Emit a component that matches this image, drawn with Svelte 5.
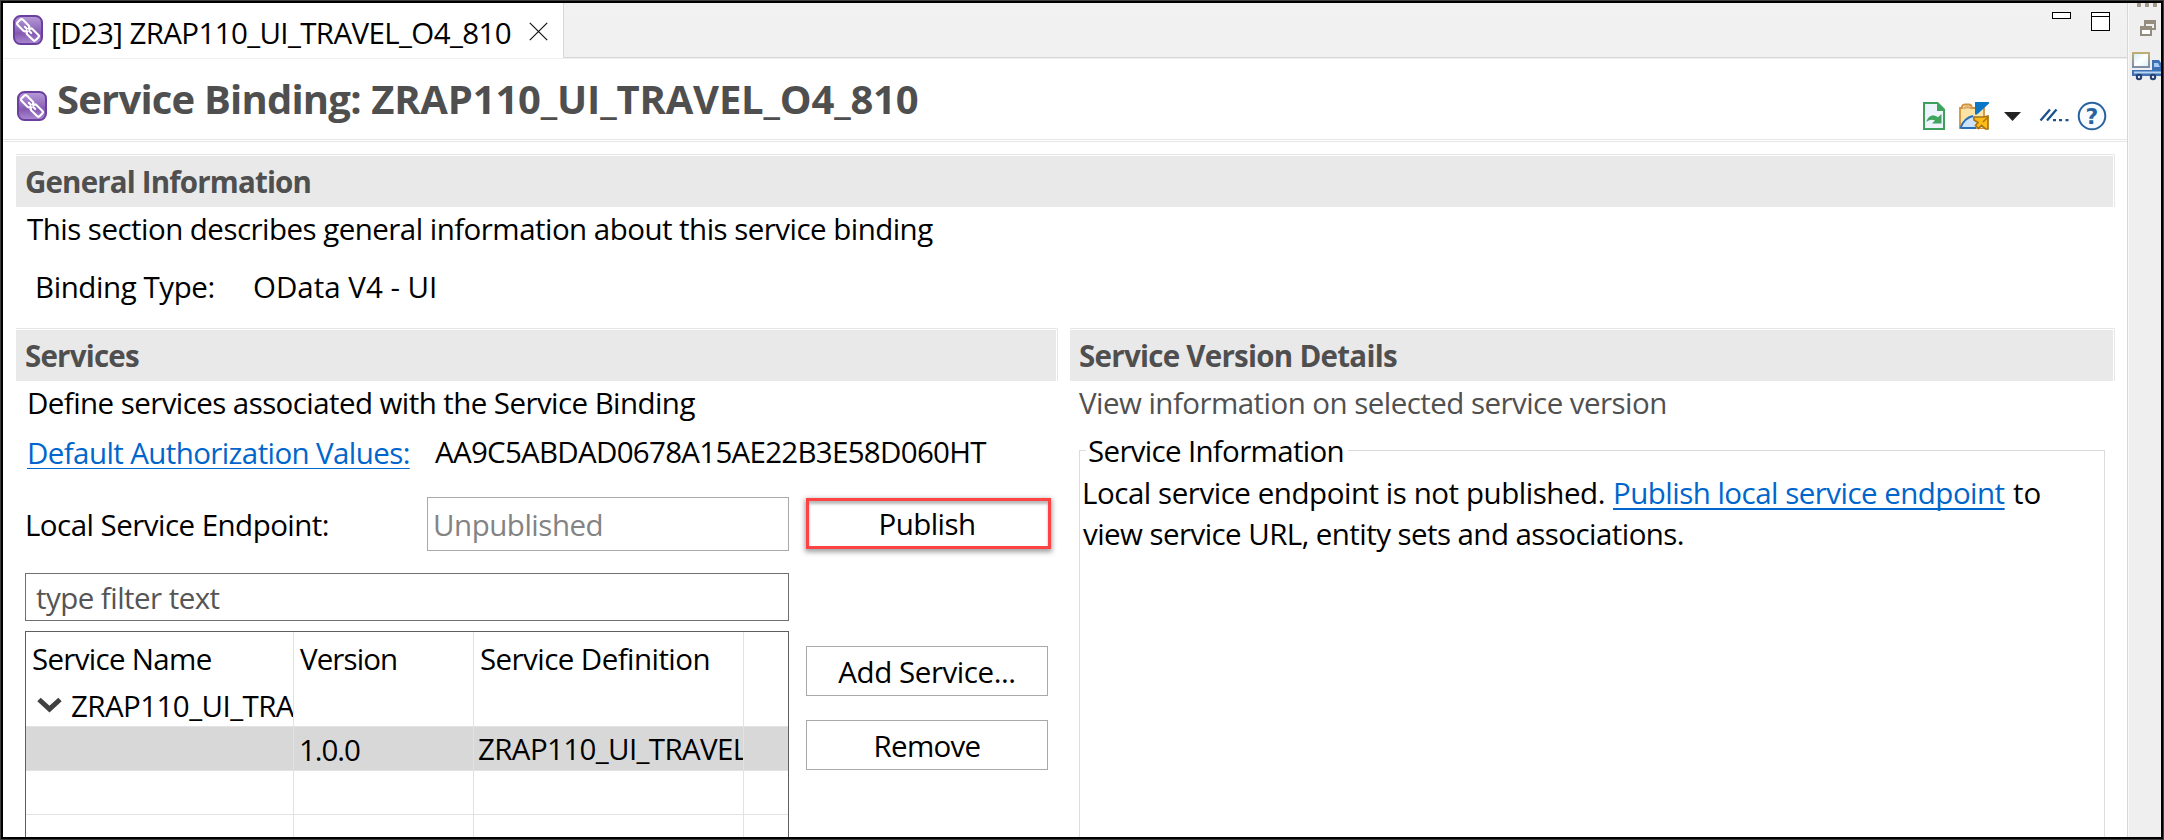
<script>
  const rows = [
    { name: 'ZRAP110_UI_TRAVEL_O4_810', version: '', definition: '', kind: 'parent' },
    { name: '', version: '1.0.0', definition: 'ZRAP110_UI_TRAVEL_O4_810', kind: 'selected' },
    { name: '', version: '', definition: '', kind: 'blank' },
    { name: '', version: '', definition: '', kind: 'blank' }
  ];
</script>

{#snippet bindingIcon(id)}
  <svg class="binding" width="30" height="30" viewBox="0 0 30 30">
    <defs>
      <linearGradient {id} x1="0" y1="0" x2="0" y2="1">
        <stop offset="0" stop-color="#b79cd8" />
        <stop offset="0.5" stop-color="#8f68bb" />
        <stop offset="0.62" stop-color="#8659b2" />
        <stop offset="1" stop-color="#aa8bd0" />
      </linearGradient>
    </defs>
    <rect x="1" y="1" width="28" height="28" rx="6.5" fill="url(#{id})" stroke="#6b3fa0" stroke-width="2" />
    <g fill="none" stroke="#fff" stroke-width="2.1" stroke-linecap="round" stroke-linejoin="round">
      <path transform="translate(10.2 10.3) rotate(45)" d="M6 1.2V1.8Q6 3.7 4 3.7H-4Q-6 3.7 -6 1.8V-1.8Q-6 -3.7 -4 -3.7H4Q6 -3.7 6 -1.8M2.2 0H5" />
      <path transform="translate(19.8 19.6) rotate(45)" d="M-6 -1.2V-1.8Q-6 -3.7 -4 -3.7H4Q6 -3.7 6 -1.8V1.8Q6 3.7 4 3.7H-4Q-6 3.7 -6 1.8M-2.2 0H-5" />
    </g>
  </svg>
{/snippet}

<div class="frame">
  <div class="window">
    <main class="editor">
      <header class="tabbar">
        <div class="tab">
          {@render bindingIcon('tab-fill')}
          <span class="tab-label">[D23] ZRAP110_UI_TRAVEL_O4_810</span>
          <svg class="close" width="19" height="19" viewBox="0 0 19 19"><path d="M.8 .8L18.2 18.2M18.2 .8L.8 18.2" stroke="#111" stroke-width="1.2" /></svg>
        </div>
        <div class="tab-rest">
          <svg width="58" height="19" viewBox="0 0 58 19" fill="#fff" stroke="#000" shape-rendering="crispEdges">
            <rect x=".5" y=".5" width="18" height="6" />
            <rect x="39.5" y=".5" width="18" height="18" />
            <path d="M39.5 4.5H57.5" />
          </svg>
        </div>
      </header>

      <div class="heading">
        {@render bindingIcon('head-fill')}
        <h1><span class="kind">Service Binding:</span> <span class="object">ZRAP110_UI_TRAVEL_O4_810</span></h1>
        <div class="tools">
          <svg width="22" height="28" viewBox="0 0 22 28">
            <path d="M1 1H14.5L21 7.5V27H1Z" fill="#eef4fc" stroke="#3f9f5c" stroke-width="2" />
            <path d="M14 0L22 8V9H14Z" fill="#3fa45c" />
            <path d="M3.5 20C4.500 14 10 11.500 15 15.200L18.500 12V21.500H9L12 18.500C9 17 6.500 17.500 3.500 20Z" fill="#3fa45c" />
          </svg>
          <svg class="folder" width="30" height="28" viewBox="0 0 30 28">
            <path d="M1 6H3V4Q4 2.500 6 2.500H10Q12.500 2.500 13 6H25V26H1Z" fill="#fbe3a6" stroke="#d1933c" stroke-width="1.800" />
            <path d="M4.500 6.500Q8.500 4 12.500 6.500" fill="none" stroke="#d9a566" stroke-width="2" />
            <path d="M2 26Q5 17 14 14H24V26Z" fill="#cfe2fb" />
            <path d="M1.500 26Q5 16 14 14M1.500 26H17" fill="none" stroke="#2470bd" stroke-width="1.800" />
            <path d="M16 0H30V1.500L18 12.500H16Z" fill="#0a78c6" />
            <path d="M15 15H25L29 14V27H26.500L22.500 23.500L19.500 26.500L16.500 23.500L19 20.500L15 18Z" fill="#fdbd16" stroke="#a9740f" stroke-width="1.700" />
            <path d="M24 20L29 15" stroke="#a9740f" stroke-width="1.500" />
          </svg>
          <svg class="caret" width="17" height="9" viewBox="0 0 17 9"><path d="M0 0H17L8.500 9Z" fill="#222" /></svg>
          <svg class="lines" width="30" height="14" viewBox="0 0 30 14">
            <path d="M1.500 12.500L11 1.500M8 12.500L17.500 1.500" stroke="#1b528e" stroke-width="2.300" />
            <path d="M14 11h3v2.300h-3zM20 11h3v2.300h-3zM26.500 11h3v2.300h-3z" fill="#1b528e" />
          </svg>
          <svg class="help" width="30" height="30" viewBox="0 0 30 30">
            <circle cx="15" cy="15" r="13.300" fill="#f8fbff" stroke="#28639f" stroke-width="2" />
            <text x="15" y="23" text-anchor="middle" font-family="DejaVu Sans, sans-serif" font-weight="700" font-size="22" fill="#28639f">?</text>
          </svg>
        </div>
      </div>

      <div class="form">
        <section class="general">
          <h2 class="bar"><span class="w-general">General Information</span></h2>
          <p class="about">This section describes general information about this service binding</p>
          <div class="type"><span class="type-label">Binding Type:</span><span class="type-value">OData V4 - UI</span></div>
        </section>

        <div class="columns">
          <section class="services">
            <h2 class="bar"><span class="w-services">Services</span></h2>
            <p class="define">Define services associated with the Service Binding</p>
            <div class="auth"><a class="auth-link" href="#auth">Default Authorization Values:</a><span class="auth-value">AA9C5ABDAD0678A15AE22B3E58D060HT</span></div>
            <div class="endpoint">
              <span class="endpoint-label">Local Service Endpoint:</span>
              <div class="field"><span>Unpublished</span></div>
              <div class="publish"><span>Publish</span></div>
            </div>
            <div class="lower">
              <div class="tree">
                <div class="filter"><span>type filter text</span></div>
                <div class="table">
                  <div class="row head">
                    <div class="cell"><span class="h-name">Service Name</span></div>
                    <div class="cell"><span class="h-version">Version</span></div>
                    <div class="cell"><span class="h-def">Service Definition</span></div>
                    <div></div>
                  </div>
                  {#each rows as row}
                    <div class="row {row.kind}">
                      <div class="cell">
                        {#if row.kind === 'parent'}
                          <svg class="chevron" width="25" height="16" viewBox="0 0 25 16"><path d="M2 2.500L12.500 12.200L23 2.500" fill="none" stroke="#404040" stroke-width="5" /></svg>
                        {/if}
                        <span class="name">{row.name}</span>
                      </div>
                      <div class="cell"><span class="version">{row.version}</span></div>
                      <div class="cell"><span class="definition">{row.definition}</span></div>
                      <div></div>
                    </div>
                  {/each}
                </div>
              </div>
              <div class="actions">
                <div class="button"><span class="b-add">Add Service...</span></div>
                <div class="button"><span class="b-remove">Remove</span></div>
              </div>
            </div>
          </section>

          <section class="details">
            <h2 class="bar"><span class="w-details">Service Version Details</span></h2>
            <p class="view">View information on selected service version</p>
            <fieldset>
              <legend><span>Service Information</span></legend>
              <p class="msg"><span class="m1">Local service endpoint is not published.</span><a class="m2" href="#publish">Publish local service endpoint</a><span class="m3">to</span></p>
              <p class="msg second">view service URL, entity sets and associations.</p>
            </fieldset>
          </section>
        </div>
      </div>
    </main>

    <aside class="strip">
      <svg width="29" height="80" viewBox="0 0 29 80">
        <g fill="#a39a8c"><path d="M5 0h4v4h-4zM13 0h4v4h-4zM21 0h4v4h-4z" /></g>
        <g fill="none" stroke="#958c80" stroke-width="2">
          <path d="M13 24V18H23V26H19" /><path d="M12 19H24" stroke-width="4" />
          <rect x="9" y="25" width="10" height="7" fill="#fff" /><path d="M8 25H20" stroke-width="4" />
        </g>
        <defs>
          <linearGradient id="cargo" x1="0" y1="0" x2="1" y2="1"><stop offset="0" stop-color="#cdeafb" /><stop offset=".5" stop-color="#fff" /><stop offset="1" stop-color="#d6effc" /></linearGradient>
          <linearGradient id="cargo-edge" x1="0" y1="0" x2="0" y2="1"><stop offset="0" stop-color="#bfae73" /><stop offset="1" stop-color="#7f8da5" /></linearGradient>
        </defs>
        <rect x="1" y="50" width="16" height="14" fill="url(#cargo)" stroke="url(#cargo-edge)" stroke-width="2" />
        <path d="M0 67H20V57H27L29 60V73H0Z" fill="#3f72b5" />
        <path d="M2 69.500H29" stroke="#b9d6f3" stroke-width="2" />
        <path d="M22 60H26L28 64H22Z" fill="#a9cdf2" />
        <circle cx="7" cy="74" r="2.200" fill="#dce6f5" stroke="#243f70" stroke-width="2" />
        <circle cx="21" cy="74" r="2.200" fill="#dce6f5" stroke="#243f70" stroke-width="2" />
      </svg>
    </aside>
  </div>
</div>

<style>
  :global(body) { margin: 0; overflow: hidden; }
  .frame, .frame * { box-sizing: border-box; }
  .frame { width: 2164px; height: 840px; border: 1px solid #3c3f3e; font: 400 29.5px/40px "Open Sans", sans-serif; color: #000; white-space: nowrap; }
  .window { display: flex; height: 838px; border: 2px solid #000; background: #fff; overflow: hidden; }
  svg { display: block; flex: none; }
  h1, h2, p { margin: 0; font-weight: 400; font-size: inherit; }
  a { color: #0066cc; text-decoration: underline; text-decoration-skip-ink: none; text-underline-offset: 4px; text-decoration-thickness: 1px; }
  .editor { width: 2124px; overflow: hidden; }
  .strip { width: 34px; border-left: 1px solid #d6d6d6; background: #efefef; padding-left: 4px; box-shadow: inset 1px 0 #f8f8f8; }

  .tabbar { display: flex; height: 56px; border-bottom: 1px solid #f0f0f0; }
  .tab { display: flex; width: 560px; padding-left: 10px; }
  .tab .binding { margin-top: 12px; }
  .tab-label { margin: 10px 0 0 8px; width: 460px; letter-spacing: -.62px; }
  .close { margin: 19px 0 0 18px; }
  .tab-rest { flex: 1; display: flex; justify-content: flex-end; padding: 9px 17px 0 0; border-left: 1px solid #d6d6d6; border-bottom: 1px solid #d6d6d6; background: linear-gradient(#f2f2f2, #f0f0f0); }

  .heading { display: flex; height: 83px; border-bottom: 1px solid #e6e6e6; box-shadow: inset 0 -1px #fff, inset 0 -2px #e6e6e6; padding-left: 14px; }
  .heading .binding { margin-top: 32px; }
  h1 { margin: 13px 0 0 10px; height: 54px; line-height: 54px; font-size: 40px; font-weight: 700; color: #4f4f4f; }
  .kind { letter-spacing: -.8px; }
  .object { letter-spacing: -.18px; }
  .tools { display: flex; margin: 43px 20px 0 auto; }
  .folder { margin-left: 14px; }
  .caret { margin: 10px 0 0 15px; }
  .lines { margin: 6px 0 0 18px; }
  .help { margin: -1px 0 0 8px; }

  .form { padding: 12px 12px 0 13px; }
  .bar { height: 53px; border-top: 1px solid #e6e6e6; border-right: 1px solid #e6e6e6; border-radius: 0 2px 0 0; padding: 1px 1px 0 0; background: #e9e9e9 content-box; color: #4f4f4f; line-height: 51px; font-weight: 700; }
  .bar span { margin-left: 9px; }
  .w-general { letter-spacing: -.84px; }
  .w-services { letter-spacing: -.79px; }
  .w-details { letter-spacing: -.73px; }
  .about { height: 43px; line-height: 43px; padding-left: 11px; letter-spacing: -.53px; }
  .type { display: flex; height: 78px; padding: 17px 0 0 19px; }
  .type-label { width: 218px; letter-spacing: -.42px; }
  .type-value { letter-spacing: 0; }

  .columns { display: grid; grid-template-columns: 1042px 1045px; column-gap: 12px; }
  .define, .view { height: 42px; line-height: 44px; }
  .define { padding-left: 11px; letter-spacing: -.57px; }
  .auth { display: flex; height: 56px; line-height: 59px; padding-left: 11px; }
  .auth-link { width: 383px; margin-right: 25px; letter-spacing: -.6px; }
  .auth-value { line-height: 57px; letter-spacing: -.71px; }
  .endpoint { display: flex; margin: 18px 0 0 9px; height: 54px; line-height: 56px; }
  .endpoint-label { width: 402px; letter-spacing: -.53px; }
  .field { width: 362px; border: 1px solid #a9a9a9; line-height: 54px; padding-left: 5px; color: #838383; letter-spacing: -.48px; }
  .publish { width: 245px; height: 51px; margin: 1px 0 0 17px; border: 3px solid #fd4343; padding-right: 3px; text-align: center; line-height: 46px; letter-spacing: -.55px; box-shadow: 0 2px 5px 1px rgba(0,0,0,.38), inset 0 3px 3px rgba(0,0,0,.28); }
  .lower { display: flex; margin: 22px 0 0 9px; }
  .tree { width: 764px; }
  .filter { height: 48px; border: 1px solid #707070; line-height: 48px; padding-left: 10px; color: #555; letter-spacing: -.54px; }
  .table { margin-top: 10px; height: 215px; border: 1px solid #5f5f5f; border-bottom: 0; overflow: hidden; }
  .row { display: grid; grid-template-columns: 268px 180px 270px 44px; height: 44px; line-height: 43px; border-top: 1px solid #e2e2e2; }
  .cell { display: flex; overflow: hidden; border-right: 1px solid #e2e2e2; }
  .head { height: 53px; line-height: 53px; border-top: 0; }
  .parent { height: 41px; line-height: 41px; border-top: 0; }
  .selected { background: #d8d8d8; }
  .chevron { margin: 12px 0 0 11px; }
  .name { margin-left: 9px; letter-spacing: -.56px; }
  .h-name { margin-left: 6px; letter-spacing: -.69px; }
  .h-version { margin-left: 6px; letter-spacing: -.9px; }
  .h-def { margin-left: 6px; letter-spacing: -.56px; }
  .version { margin-left: 5px; line-height: 45px; letter-spacing: -1.05px; }
  .definition { margin-left: 4px; letter-spacing: -.62px; }
  .actions { display: grid; grid-auto-rows: 50px; row-gap: 24px; width: 242px; margin: 73px 0 0 17px; }
  .button { border: 1px solid #a9a9a9; text-align: center; line-height: 50px; }
  .b-add { letter-spacing: -.43px; }
  .b-remove { letter-spacing: -.72px; }

  .view { padding-left: 9px; color: #505050; letter-spacing: -.54px; }
  fieldset { margin: 7px 10px 0 9px; padding: 0; min-width: 0; height: 440px; border: 1px solid #dcdcdc; }
  legend { height: 40px; margin-left: 6px; padding: 0 4px 0 2px; line-height: 42px; letter-spacing: -.68px; }
  .msg { display: flex; height: 42px; line-height: 45px; padding-left: 2px; }
  .m1 { width: 531px; letter-spacing: -.45px; }
  .m2 { width: 392px; margin-right: 8px; letter-spacing: -.52px; text-decoration-thickness: 2px; }
  .second { height: 41px; line-height: 43px; padding-left: 3px; letter-spacing: -.56px; }
</style>
